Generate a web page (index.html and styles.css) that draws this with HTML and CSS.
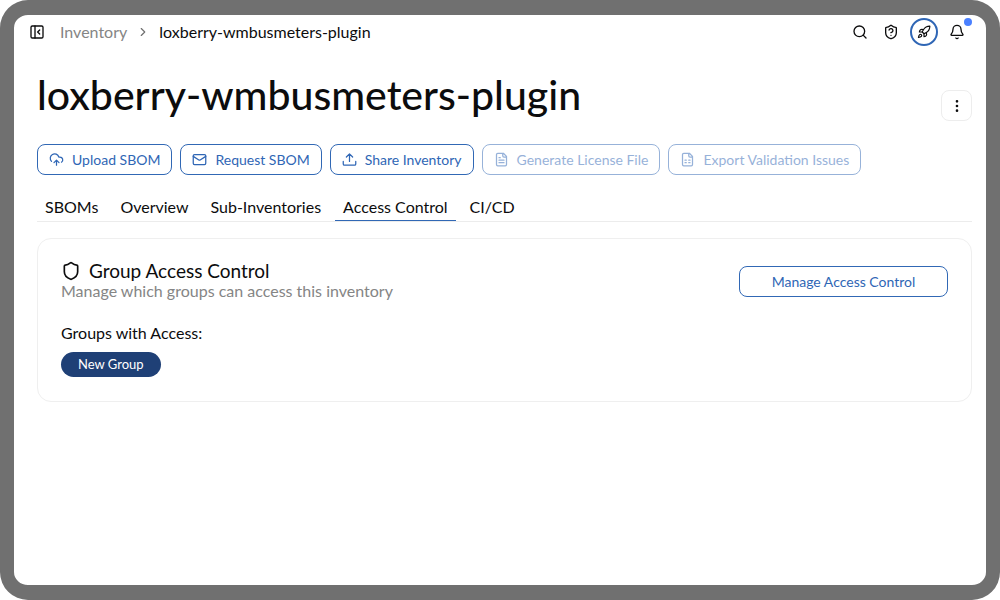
FILE: index.html
```html
<!DOCTYPE html>
<html lang="en">
<head>
<meta charset="utf-8">
<meta name="viewport" content="width=device-width, initial-scale=1">
<title>loxberry-wmbusmeters-plugin</title>
<link rel="stylesheet" href="styles.css">
</head>
<body>
<div class="frame">
  <header class="topbar">
    <button class="icon-button" aria-label="Collapse sidebar"><svg class="icon" viewBox="0 0 24 24"><rect x="3" y="3" width="18" height="18" rx="2"/><path d="M9 3v18M16 15l-3-3 3-3"/></svg></button>
    <nav class="breadcrumb" aria-label="Breadcrumb">
      <a class="crumb-link" href="#">Inventory</a>
      <svg class="icon chevron" viewBox="0 0 24 24"><path d="m9 18 6-6-6-6"/></svg>
      <span>loxberry-wmbusmeters-plugin</span>
    </nav>
    <div class="tools">
      <button class="icon-button" aria-label="Search"><svg class="icon" viewBox="0 0 24 24"><circle cx="11" cy="11" r="8"/><path d="m21 21-4.3-4.3"/></svg></button>
      <button class="icon-button" aria-label="Security help"><svg class="icon" viewBox="0 0 24 24"><path d="M20 13c0 5-3.500 7.500-7.660 8.950a1 1 0 0 1-.67-.01C7.500 20.500 4 18 4 13V6a1 1 0 0 1 1-1c2 0 4.500-1.200 6.240-2.720a1.170 1.170 0 0 1 1.520 0C14.510 3.810 17 5 19 5a1 1 0 0 1 1 1z"/><path d="M9.100 9a3 3 0 0 1 5.820 1c0 2-3 3-3 3M12 17h.01"/></svg></button>
      <button class="icon-button launch" aria-label="Get started"><svg class="icon" viewBox="0 0 24 24"><path d="M4.500 16.500c-1.500 1.260-2 5-2 5s3.740-.5 5-2c.71-.84.7-2.130-.09-2.910a2.180 2.180 0 0 0-2.910-.09z"/><path d="m12 15-3-3a22 22 0 0 1 2-3.950A12.880 12.880 0 0 1 22 2c0 2.720-.78 7.500-6 11a22.350 22.350 0 0 1-4 2z"/><path d="M9 12H4s.55-3.030 2-4c1.620-1.080 5 0 5 0M12 15v5s3.030-.55 4-2c1.080-1.620 0-5 0-5"/></svg></button>
      <button class="icon-button bell" aria-label="Notifications"><svg class="icon" viewBox="0 0 24 24"><path d="M10.300 21a2 2 0 0 0 3.400 0M3.260 15.330A1 1 0 0 0 4 17h16a1 1 0 0 0 .74-1.670C19.410 13.960 18 12.500 18 8A6 6 0 0 0 6 8c0 4.500-1.410 5.960-2.740 7.330z"/></svg><span class="badge"></span></button>
    </div>
  </header>
  <main class="content">
    <div class="heading">
      <h1 class="title">loxberry-wmbusmeters-plugin</h1>
      <button class="more" aria-label="More actions"><svg class="icon" viewBox="0 0 24 24"><circle cx="12" cy="5" r="1"/><circle cx="12" cy="12" r="1"/><circle cx="12" cy="19" r="1"/></svg></button>
    </div>
    <div class="actions">
      <button class="button"><svg class="icon" viewBox="0 0 24 24"><path d="M12 13v8M4 14.900A7 7 0 1 1 15.710 8h1.790a4.500 4.500 0 0 1 2.500 8.240M8 17l4-4 4 4"/></svg>Upload SBOM</button>
      <button class="button"><svg class="icon" viewBox="0 0 24 24"><rect x="2" y="4" width="20" height="16" rx="2"/><path d="m22 7-8.970 5.700a1.940 1.940 0 0 1-2.060 0L2 7"/></svg>Request SBOM</button>
      <button class="button"><svg class="icon" viewBox="0 0 24 24"><path d="M2 15v4a2 2 0 0 0 2 2h16a2 2 0 0 0 2-2v-4M17 8l-5-5-5 5M12 3v12"/></svg>Share Inventory</button>
      <button class="button" disabled><svg class="icon" viewBox="0 0 24 24"><path d="M15 2H6a2 2 0 0 0-2 2v16a2 2 0 0 0 2 2h12a2 2 0 0 0 2-2V7zM14 2v4a2 2 0 0 0 2 2h4M10 9H8M16 13H8M16 17H8"/></svg>Generate License File</button>
      <button class="button" disabled><svg class="icon" viewBox="0 0 24 24"><path d="M15 2H6a2 2 0 0 0-2 2v16a2 2 0 0 0 2 2h12a2 2 0 0 0 2-2V7zM14 2v4a2 2 0 0 0 2 2h4M8 13h2M14 13h2M8 17h2M14 17h2"/></svg>Export Validation Issues</button>
    </div>
    <div class="tabs" role="tablist">
      <button class="tab" role="tab" aria-selected="false">SBOMs</button>
      <button class="tab" role="tab" aria-selected="false">Overview</button>
      <button class="tab" role="tab" aria-selected="false">Sub-Inventories</button>
      <button class="tab" role="tab" aria-selected="true">Access Control</button>
      <button class="tab" role="tab" aria-selected="false">CI/CD</button>
    </div>
    <section class="card">
      <div class="card-header">
        <div>
          <h2 class="card-title"><svg class="icon" viewBox="0 0 24 24"><path d="M20 13c0 5-3.500 7.500-7.660 8.950a1 1 0 0 1-.67-.01C7.500 20.500 4 18 4 13V6a1 1 0 0 1 1-1c2 0 4.500-1.200 6.240-2.720a1.170 1.170 0 0 1 1.520 0C14.510 3.810 17 5 19 5a1 1 0 0 1 1 1z"/></svg>Group Access Control</h2>
          <p class="description">Manage which groups can access this inventory</p>
        </div>
        <button class="button manage">Manage Access Control</button>
      </div>
      <h3 class="groups-title">Groups with Access:</h3>
      <span class="pill">New Group</span>
    </section>
  </main>
</div>
</body>
</html>
```
FILE: styles.css
```css
* { box-sizing: border-box; }
body {
  margin: 0;
  background: #fff;
  color: #0c0c0d;
  font-family: Lato, sans-serif;
  font-size: 16px;
}
button { font: inherit; color: inherit; background: none; border: 0; padding: 0; }
h1, h2, h3, p { margin: 0; font-weight: 400; }
.frame {
  min-height: 100vh;
  border: solid #707070;
  border-width: 15px 14px;
  border-radius: 28px;
}
.icon {
  width: 16px;
  height: 16px;
  flex: none;
  fill: none;
  stroke: currentColor;
  stroke-width: 2;
  stroke-linecap: round;
  stroke-linejoin: round;
}
.topbar { display: flex; align-items: center; height: 34px; padding: 0 11px; }
.icon-button { display: flex; align-items: center; justify-content: center; width: 24px; height: 28px; }
.breadcrumb { display: flex; align-items: center; gap: 9px; margin-left: 11px; line-height: 20px; }
.crumb-link { color: #858585; text-decoration: none; }
.chevron { width: 14px; height: 14px; color: #707070; }
.tools { display: flex; align-items: center; gap: 7px; margin-left: auto; padding-right: 6px; }
.launch { width: 28px; border: 2px solid #2f66b5; border-radius: 50%; }
.launch .icon { width: 14px; height: 14px; }
.bell { position: relative; }
.badge { position: absolute; top: 0; right: -3px; width: 8px; height: 8px; border-radius: 50%; background: #4a80ff; }
.content { padding: 21px 14px 24px 23px; }
.heading { display: flex; justify-content: space-between; align-items: flex-end; height: 51px; margin-bottom: 23px; }
.title { font-size: 41px; line-height: 50px; align-self: flex-start; font-weight: 500; }
.more { display: flex; align-items: center; justify-content: center; width: 31px; height: 31px; border: 1px solid #ededed; border-radius: 8px; }
.actions { display: flex; flex-wrap: wrap; gap: 8px; }
.button {
  display: flex;
  align-items: center;
  justify-content: center;
  gap: 8px;
  height: 31px;
  padding: 0 11px 1px;
  border: 1px solid #3168b5;
  border-radius: 8px;
  color: #2f66b5;
  font-size: 14px;
  white-space: nowrap;
}
.button .icon { width: 15px; height: 15px; }
.button:disabled { opacity: 0.5; }
.tabs { display: flex; gap: 6px; margin-top: 16px; border-bottom: 1px solid #ececec; }
.tab { height: 30px; padding: 2px 8px 0; border-bottom: 1px solid transparent; }
.tab[aria-selected="true"] { border-color: #3168b5; }
.card { margin-top: 16px; padding: 22px 23px 24px; border: 1px solid #efefef; border-radius: 14px; }
.card-header { display: flex; justify-content: space-between; align-items: center; }
.card-title { display: flex; align-items: center; gap: 8px; font-size: 19px; line-height: 20px; }
.card-title .icon { width: 20px; height: 20px; }
.description { color: #858585; line-height: 19px; }
.manage { width: 209px; margin-top: 2px; }
.groups-title { margin: 23px 0 9px; font-size: 16px; line-height: 20px; }
.pill {
  display: block;
  width: fit-content;
  padding: 0 17px;
  border-radius: 13px;
  background: #1f4076;
  color: #fff;
  font-size: 13px;
  line-height: 25px;
}
```
